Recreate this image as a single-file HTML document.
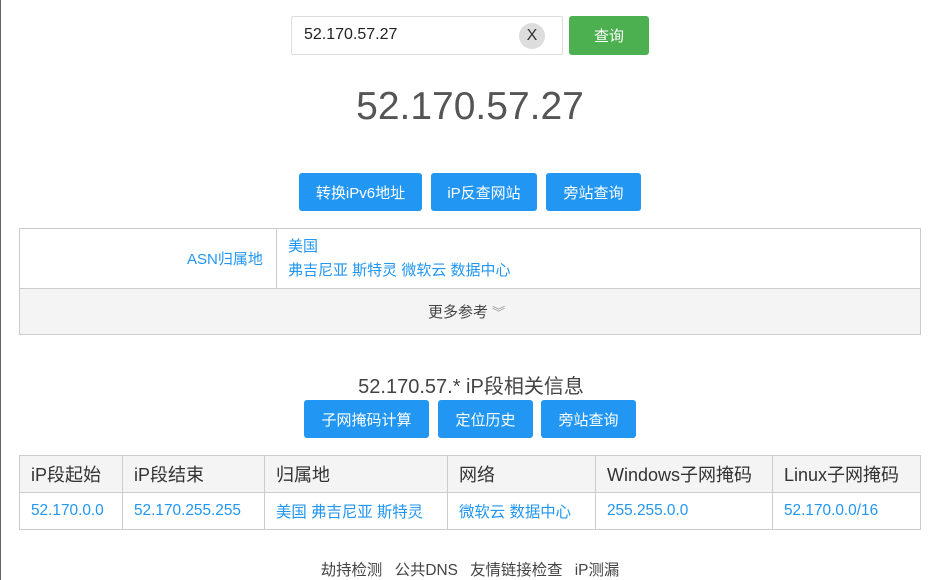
<!DOCTYPE html>
<html><head><meta charset="utf-8"><style>
*{box-sizing:border-box;margin:0;padding:0}
body{width:944px;height:580px;overflow:hidden;background:#fff;font-family:"Liberation Sans","Noto Sans CJK SC",sans-serif;position:relative}
.a{position:absolute}
.btn{position:absolute;background:#2196f3;color:#fff;font-size:15px;border-radius:3px;display:flex;align-items:center;justify-content:center}
.lk{color:#2196f3}
table{border-collapse:collapse}
td{border:1px solid #ccc}
</style></head><body>
<div class="a" style="left:0;top:0;width:1px;height:580px;background:#666"></div>
<div class="a" style="left:291px;top:16px;width:272px;height:39px;border:1px solid #ddd;border-radius:2px"></div>
<div class="a" style="left:304px;top:26px;font-size:16px;color:#222">52.170.57.27</div>
<div class="a" style="left:519px;top:23px;width:26px;height:26px;border-radius:50%;background:#ddd;color:#333;font-size:16px;text-align:center;line-height:26px">X</div>
<div class="btn" style="left:569px;top:16px;width:80px;height:39px;background:#4caf50">查询</div>
<div class="a" style="left:0;width:940px;top:85px;text-align:center;font-size:39px;color:#555">52.170.57.27</div>
<div class="btn" style="left:299px;top:173px;width:123px;height:38px">转换iPv6地址</div>
<div class="btn" style="left:431px;top:173px;width:106px;height:38px">iP反查网站</div>
<div class="btn" style="left:546px;top:173px;width:95px;height:38px">旁站查询</div>
<div class="a" style="left:19px;top:228px;width:902px;height:107px;border:1px solid #ccc"></div>
<div class="a" style="left:276px;top:228px;width:1px;height:60px;background:#ccc"></div>
<div class="a" style="left:20px;top:288px;width:900px;height:46px;background:#f4f4f4;border-top:1px solid #ccc"></div>
<div class="a lk" style="left:187px;top:248px;font-size:15px">ASN归属地</div>
<div class="a lk" style="left:288px;top:235px;font-size:15px;line-height:24px">美国<br>弗吉尼亚 斯特灵 微软云 数据中心</div>
<div class="a" style="left:428px;top:301px;font-size:15px;color:#444">更多参考 <span style="color:#999;font-size:13px">︾</span></div>
<div class="a" style="left:0;width:942px;top:370px;text-align:center;font-size:20px;color:#444">52.170.57.* iP段相关信息</div>
<div class="btn" style="left:304px;top:400px;width:125px;height:38px">子网掩码计算</div>
<div class="btn" style="left:438px;top:400px;width:95px;height:38px">定位历史</div>
<div class="btn" style="left:541px;top:400px;width:95px;height:38px">旁站查询</div>
<table class="a" style="left:19px;top:455px;width:902px;font-size:18px">
<tr style="background:#f4f4f4;height:37px;color:#333"><td style="width:103px;padding-left:11px">iP段起始</td><td style="width:142px;padding-left:11px">iP段结束</td><td style="width:183px;padding-left:11px">归属地</td><td style="width:148px;padding-left:11px">网络</td><td style="width:177px;padding-left:11px">Windows子网掩码</td><td style="padding-left:11px">Linux子网掩码</td></tr>
<tr style="height:37px;font-size:15.4px;color:#2196f3"><td style="padding-left:11px">52.170.0.0</td><td style="padding-left:11px">52.170.255.255</td><td style="padding-left:11px">美国 弗吉尼亚 斯特灵</td><td style="padding-left:11px">微软云 数据中心</td><td style="padding-left:11px">255.255.0.0</td><td style="padding-left:11px">52.170.0.0/16</td></tr>
</table>
<div class="a" style="left:0;width:940px;top:558px;text-align:center;font-size:15.4px;color:#444;word-spacing:8px">劫持检测 公共DNS 友情链接检查 iP测漏</div>
</body></html>
